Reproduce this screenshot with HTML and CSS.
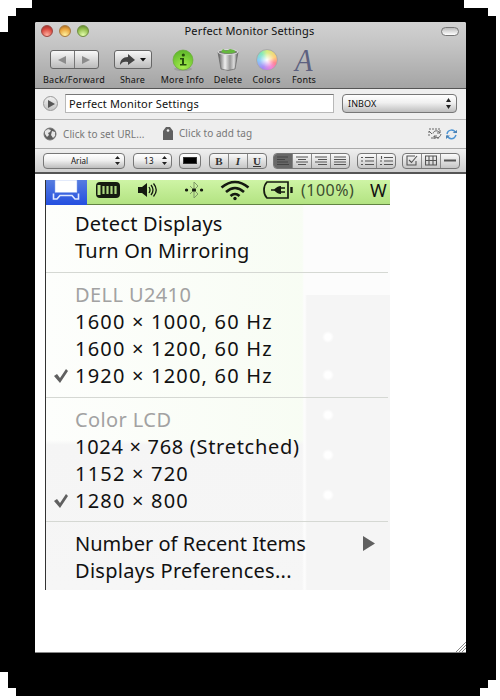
FILE: index.html
```html
<!DOCTYPE html>
<html lang="en">
<head>
<meta charset="utf-8">
<title>Perfect Monitor Settings</title>
<link rel="stylesheet" href="styles.css">
</head>
<body>
<main class="backdrop">
<section class="window">
  <header class="chrome">
    <div class="titlebar">
      <div class="lights"><i class="red"></i><i class="amber"></i><i class="green"></i></div>
      <h1>Perfect Monitor Settings</h1>
      <span class="pill"></span>
    </div>
    <nav class="tools">
      <div class="tool nav"><div class="icon"><div class="buttons"><b><svg width="8" height="8"><path d="M8 0V8L0 4Z" fill="#8c8c8c"/></svg></b><b><svg width="8" height="8"><path d="M0 0V8L8 4Z" fill="#8c8c8c"/></svg></b></div></div><span>Back/Forward</span></div>
      <div class="tool share"><div class="icon"><div class="buttons"><b><svg width="28" height="14"><path d="M1 12C1 7 4 4 9 4V1L16 7L9 12V9C5 8 3 9 1 12Z" fill="#444"/><path d="M21 5H27L24 8.500Z" fill="#111"/></svg></b></div></div><span>Share</span></div>
      <div class="tool info"><div class="icon"><svg width="24" height="24"><defs><radialGradient id="g" cx=".5" cy=".85" r=".9"><stop stop-color="#a6ee4d"/><stop offset="1" stop-color="#59b328"/></radialGradient></defs><ellipse cx="12" cy="21" rx="9" ry="2" fill="#888" opacity=".5"/><circle cx="12" cy="12" r="10" fill="url(#g)" stroke="#62a82d" stroke-width=".6"/><circle cx="12.300" cy="7" r="1.600" fill="#244c0c"/><path d="M9 10H13V16H15.500V17.500H9V16H11V11.500H9Z" fill="#244c0c"/></svg></div><span>More Info</span></div>
      <div class="tool trash"><div class="icon"><svg width="24" height="24"><defs><linearGradient id="t"><stop stop-color="#555"/><stop offset=".35" stop-color="#eee"/><stop offset=".6" stop-color="#999"/><stop offset=".8" stop-color="#ddd"/><stop offset="1" stop-color="#555"/></linearGradient></defs><path d="M2 4L5 21Q12 24 19 21L22 4Z" fill="url(#t)" stroke="#666" stroke-width=".7"/><ellipse cx="12" cy="4" rx="10" ry="2.500" fill="#777" stroke="#ddd"/><path d="M5 4L7 1L10 3L14 1L18 2L20 4Q12 7 5 4Z" fill="#65b83e"/></svg></div><span>Delete</span></div>
      <div class="tool colors"><div class="icon"><i class="wheel"></i></div><span>Colors</span></div>
      <div class="tool fonts"><div class="icon"><em>A</em></div><span>Fonts</span></div>
    </nav>
  </header>
  <div class="title-row">
    <span class="play"><svg width="7" height="8"><path d="M0 0V8L7 4Z" fill="#555"/></svg></span>
    <div class="field">Perfect Monitor Settings</div>
    <div class="popup inbox"><span>INBOX</span><svg width="5" height="11"><path d="M0 4L2.500 0L5 4ZM0 7H5L2.500 11Z" fill="#222"/></svg></div>
  </div>
  <div class="meta-row">
    <svg class="globe" width="14" height="14"><circle cx="7" cy="7" r="6" fill="#5d5d5d" stroke="#777"/><path d="M2 4L5 2L8 3L7 5L5 6L6 8L4 10L2 7ZM9 4L12 5V9L10 11L8 8Z" fill="#e5e5e5"/></svg>
    <span class="url">Click to set URL...</span>
    <svg class="tag" width="10" height="14"><path d="M0 4L3 0H7L10 4V13H0Z" fill="#606060"/><circle cx="5" cy="3.500" r="1.300" fill="#eee"/></svg>
    <span class="addtag">Click to add tag</span>
    <svg class="sync" width="14" height="12" fill="none" stroke="#666"><path d="M1 1H12M1 3V8M3 10H12" stroke-dasharray="2 1"/><path d="M1 3L4 6M5 5.500C6 2 10 2 12 5M12 2V5H9M13 6C12 10.500 8 10.500 6 8M6 11V8H9"/></svg>
    <svg class="refresh" width="11" height="11" fill="none" stroke="#4d94d3" stroke-width="1.500"><path d="M1 5C2 0 8 0 9.500 4M1 6.500C3 11 8 11 10 6"/><path d="M6.500 4H11V1ZM0 10V6.500H4Z" fill="#4d82b3" stroke="none"/></svg>
  </div>
  <div class="format">
    <div class="popup face"><span>Arial</span><svg width="5" height="9"><path d="M0 3L2.500 0L5 3ZM0 6H5L2.500 9Z" fill="#222"/></svg></div>
    <div class="popup size"><span>13</span><svg width="5" height="9"><path d="M0 3L2.500 0L5 3ZM0 6H5L2.500 9Z" fill="#222"/></svg></div>
    <div class="popup swatch"><i></i></div>
    <div class="seg biu"><b>B</b><b><em>I</em></b><b><u>U</u></b></div>
    <div class="seg align">
      <b class="on"><svg width="12" height="10"><path d="M0 1H11M0 3.500H8M0 6H11M0 8.500H12"/></svg></b>
      <b><svg width="12" height="10"><path d="M0 1H12M2 3.500H10M0 6H12M2 8.500H10"/></svg></b>
      <b><svg width="12" height="10"><path d="M0 1H12M3 3.500H12M0 6H12M3 8.500H12"/></svg></b>
      <b><svg width="12" height="10"><path d="M0 1H12M0 3.500H12M0 6H12M0 8.500H12"/></svg></b>
    </div>
    <div class="seg lists">
      <b><svg width="13" height="10"><path d="M0 1.500H2M4 1.500H13M0 5H2M4 5H13M0 8.500H2M4 8.500H13"/></svg></b>
      <b><svg width="13" height="10"><path d="M1.500 0V3M0 5H2M0 8.500H2M4 1.500H13M4 5H13M4 8.500H13"/></svg></b>
    </div>
    <div class="seg insert">
      <b><svg width="12" height="11"><path d="M9 1H1V10H10V6M3 5L5.500 7.500L11 1"/></svg></b>
      <b><svg width="12" height="11"><path d="M.5 1H11.500V10H.5ZM4 1V10M8 1V10M0 5.500H12"/></svg></b>
      <b><svg width="12" height="11"><path d="M0 5.500H12" stroke-width="2"/></svg></b>
    </div>
  </div>
  <div class="content">
    <div class="shot">
      <div class="menubar">
        <div class="active"><svg width="28" height="22" fill="none" stroke="#dfe8ff"><path d="M3 0H25V12.500H3Z" fill="#fff" stroke="#8fa9ee" stroke-width=".5"/><path d="M1.500 13.500V19H5L8 15.500H20L23 19H26.500V13.500" stroke-width="1.600"/></svg></div>
        <svg class="ram" width="26" height="18"><rect x="1" y="1" width="24" height="16" rx="4" fill="#151b10"/><rect x="2.500" y="4" width="3" height="10" fill="#b7e487"/><path d="M8.500 5V13M12.500 5V13M16.500 5V13M20.500 5V13" stroke="#abd77f" stroke-width="2.200"/></svg>
        <svg class="sound" width="21" height="16" fill="none" stroke="#141a10" stroke-width="1.600"><path d="M1 5H5L10 1V15L5 11H1Z" fill="#141a10" stroke="none"/><path d="M12 5Q14 8 12 11M14 3Q18 8 14 13M16.500 1.500Q22 8 16.500 14.500" stroke-width="1.300"/></svg>
        <svg class="bt" width="20" height="20"><path d="M10 2V18L14 14L6 6M6 14L14 6L10 2" fill="none" stroke="#809b68"/><path d="M2.500 10H2.600M9.500 10H10.500M17.500 10H17.600" stroke="#151b10" stroke-width="3.200" stroke-linecap="round"/></svg>
        <svg class="wifi" width="30" height="21" fill="none" stroke="#151b10" stroke-width="2.600"><path d="M1.500 7.500Q15-3.500 28.500 7.500M6 12Q15 4 24 12M10.500 16Q15 12 19.500 16"/><circle cx="15" cy="18.500" r="1.700" fill="#151b10" stroke="none"/></svg>
        <svg class="battery" width="31" height="18" fill="none" stroke="#151b10" stroke-width="1.700"><path d="M4 1H25V17H4Q1 14 1 9T4 1Z"/><path d="M28.500 6V12" stroke-width="2.400"/><path d="M8 9H12M18 7H22M18 11H22"/><path d="M11 9Q14 5 18 5V13Q14 13 11 9Z" fill="#151b10" stroke="none"/></svg>
        <span class="percent">(100%)</span>
        <span class="day">W</span>
      </div>
      <div class="menu">
        <div class="row"><span class="a1">Detect Displays</span></div>
        <div class="row"><span class="a2">Turn On Mirroring</span></div>
        <hr>
        <div class="row label"><span>DELL U2410</span></div>
        <div class="row num"><span>1600 × 1000, 60 Hz</span></div>
        <div class="row num"><span>1600 × 1200, 60 Hz</span></div>
        <div class="row num"><svg class="check" width="16" height="16"><path d="M1 8L4 6L7 10L13 1L15 3L7 15Z" fill="#606060"/></svg><span>1920 × 1200, 60 Hz</span></div>
        <hr>
        <div class="row label"><span>Color LCD</span></div>
        <div class="row num"><span class="a5">1024 × 768 (Stretched)</span></div>
        <div class="row num"><span>1152 × 720</span></div>
        <div class="row num"><svg class="check" width="16" height="16"><path d="M1 8L4 6L7 10L13 1L15 3L7 15Z" fill="#606060"/></svg><span>1280 × 800</span></div>
        <hr class="last">
        <div class="row"><span class="a6">Number of Recent Items</span><svg class="more" width="12" height="15"><path d="M0 0V15L12 7.500Z" fill="#606060"/></svg></div>
        <div class="row"><span class="a7">Displays Preferences...</span></div>
      </div>
    </div>
    <svg class="grip" width="11" height="11"><path d="M1 11L11 1M4 11L11 4M7 11L11 7" stroke="#888" fill="none"/></svg>
  </div>
</section>
</main>
</body>
</html>
```
FILE: styles.css
```css
* { box-sizing: border-box; }
body { margin: 0; background: #fff; font-family: "Noto Sans", "Open Sans", sans-serif; color: #111; }
svg { display: block; flex: none; }
.backdrop {
  width: 496px; height: 696px; padding: 22px 30px 43px 35px; background: #000;
  clip-path: polygon(32px 0, 464px 0, 464px 8px, 488px 8px, 488px 16px, 496px 16px, 496px 680px, 488px 680px, 488px 688px, 480px 688px, 480px 696px, 16px 696px, 16px 688px, 8px 688px, 8px 672px, 0 672px, 0 32px, 8px 32px, 8px 16px, 16px 16px, 16px 8px, 32px 8px);
}
.window { width: 431px; height: 631px; background: #fff; display: flex; flex-direction: column; border-radius: 2px 2px 0 0; overflow: hidden; border-bottom: 1px solid #888; }
.chrome { height: 67px; background: linear-gradient(#d2d2d2, #c4c4c4 35%, #a4a4a4); border-bottom: 1px solid #555; }
.titlebar { height: 19px; display: grid; grid-template-columns: 60px 1fr 60px; align-items: center; }
.lights { display: flex; gap: 6px; padding: 0 0 1px 6px; }
.lights i { width: 12px; height: 12px; border-radius: 50%; border: 1px solid #775; }
.lights .red { background: radial-gradient(circle at 50% 90%, #ffb0a0, #d8493f 60%, #8d2e28); border-color: #9a4742; }
.lights .amber { background: radial-gradient(circle at 50% 90%, #fff2a0, #e9a43c 60%, #985d1d); border-color: #a77a40; }
.lights .green { background: radial-gradient(circle at 50% 90%, #e5ffae, #92bd4c 60%, #547a2a); border-color: #708d43; }
h1 { margin: 0; font-size: 11px; line-height: 16px; padding: 0 2px 2px 0; font-weight: 400; text-align: center; letter-spacing: .18px; white-space: nowrap; }
.pill { width: 18px; height: 9px; border: 1px solid #777; border-radius: 5px; background: linear-gradient(#bbb, #fff); justify-self: end; margin: 0 7px 1px 0; }
.tools { height: 47px; display: flex; padding-left: 4px; }
.tool { display: flex; flex-direction: column; align-items: center; font-size: 9px; line-height: 13px; white-space: nowrap; }
.icon { height: 32px; padding-top: 5px; display: flex; align-items: center; justify-content: center; }
.nav { width: 70px; letter-spacing: .32px; } .share { width: 47px; letter-spacing: .2px; } .info { width: 53px; letter-spacing: .2px; } .trash { width: 38px; letter-spacing: .2px; } .colors { width: 39px; letter-spacing: .2px; } .fonts { width: 36px; letter-spacing: .2px; }
.buttons { display: flex; height: 19px; border: 1px solid #666; border-radius: 3px; background: linear-gradient(#f8f8f8, #bbb); }
.buttons b { width: 23px; display: flex; align-items: center; justify-content: center; }
.buttons b + b { width: 24px; border-left: 1px solid #777; }
.share b { width: 36px; }
.wheel { width: 22px; height: 22px; border-radius: 50%; background: radial-gradient(circle, #fff, rgba(255,255,255,.3) 50%, transparent), conic-gradient(#c9e85a, #ffc14f 70deg, #ff5e6e 110deg, #ee60cf 150deg, #8a68f4 210deg, #64bdf4 270deg, #5be2a5 320deg, #c9e85a); border: 1px solid #aaa; }
.fonts em { font: italic 32px/22px "Liberation Serif", serif; color: #5d6180; transform: scaleX(.9); }
.title-row { height: 31px; display: flex; align-items: center; background: #efefef; padding: 0 0 1px 8px; border-bottom: 1px solid #b5b5b5; }
.play { width: 15px; height: 15px; border: 1px solid #999; border-radius: 50%; background: linear-gradient(#f0f0f0, #c5c5c5); display: flex; align-items: center; justify-content: center; padding-left: 1px; }
.field { width: 269px; height: 19px; margin-left: 7px; padding-left: 3px; background: #fff; border: 1px solid #b8b8b8; border-top-color: #777; font-size: 11px; line-height: 18px; letter-spacing: .18px; }
.popup { display: flex; align-items: center; justify-content: space-between; border: 1px solid #777; border-radius: 4px; background: linear-gradient(#fff, #f0f0f0 45%, #bebebe); }
.inbox { width: 115px; height: 19px; margin-left: 8px; padding: 0 5px; font-size: 9px; letter-spacing: .1px; }
.meta-row { height: 29px; display: flex; align-items: center; background: #eee; border-bottom: 1px solid #aaa; padding-left: 8px; font-size: 10px; color: #777; white-space: nowrap; }
.url { width: 98px; margin-left: 6px; letter-spacing: .08px; }
.tag { margin-left: 2px; }
.addtag { width: 233px; margin-left: 6px; padding-bottom: 2px; letter-spacing: .05px; }
.sync { margin-left: 16px; } .refresh { margin-left: 4px; }
.format { height: 25px; display: flex; align-items: center; background: linear-gradient(#efefef, #cfcfcf); border-bottom: 2px solid #555; padding-left: 8px; font-size: 8px; }
.format .popup { height: 16px; }
.face { width: 82px; padding: 0 4px 0 27px; }
.size { width: 39px; margin-left: 8px; padding: 0 4px 0 10px; letter-spacing: .3px; }
.swatch { width: 22px; margin-left: 7px; padding: 0 3px; }
.swatch i { width: 14px; height: 7px; border: 1px solid #333; background: #000; }
.seg { height: 16px; border: 1px solid #777; border-radius: 4px; background: linear-gradient(#fafafa, #c6c6c6); display: flex; overflow: hidden; }
.seg b { flex: 1; display: flex; align-items: center; justify-content: center; font: bold 11px "Liberation Serif", serif; color: #333; }
.seg b + b { border-left: 1px solid #888; }
.seg svg { fill: none; stroke: #555; stroke-width: 1.1; }
.seg .on { background: #686868; } .seg .on svg { stroke: #444; }
.biu { width: 58px; margin-left: 8px; } .align { width: 77px; margin-left: 6px; } .lists { width: 39px; margin-left: 7px; } .insert { width: 58px; margin-left: 6px; }
.content { flex: 1; position: relative; padding: 6px 0 0 10px; }
.shot { width: 345px; height: 410px; border-left: 1px solid #333; }
.menubar { height: 25px; display: flex; align-items: flex-start; background: linear-gradient(#cef4a5, #b3e382); border-bottom: 1px solid #618342; }
.active { flex: none; width: 41px; height: 25px; background: linear-gradient(#567cdf, #244fe0); padding-left: 6px; }
.ram { margin: 1px 0 0 8px; } .sound { margin: 2px 0 0 16px; } .bt { margin-left: 26px; } .wifi { margin-left: 16px; } .battery { margin: 1px 0 0 13px; }
.percent { flex: none; margin-left: 7px; width: 69px; font-size: 16px; line-height: 20px; letter-spacing: .5px; color: #3d4e2f; }
.day { flex: none; font-size: 18px; line-height: 21px; }
.menu { height: 385px; padding-top: 5px; background: radial-gradient(circle at 282px 132px, #fff 3px, transparent 6px), radial-gradient(circle at 282px 170px, #fff 3px, transparent 6px), radial-gradient(circle at 282px 210px, #fff 3px, transparent 6px), radial-gradient(circle at 282px 250px, #fff 3px, transparent 6px), radial-gradient(circle at 282px 290px, #fff 3px, transparent 6px), linear-gradient(90deg, transparent 259px, #f5f5f5 261px) 0 90px no-repeat, linear-gradient(90deg, transparent 256px, #fcfcfc 258px), linear-gradient(transparent 235px, #f5f5f5 240px, #f6f6f6), linear-gradient(90deg, #fdfefc, #f6fcf1); }
.row { position: relative; height: 27px; display: flex; align-items: center; padding-left: 29px; font-size: 20px; line-height: 27px; white-space: pre; }
.label { color: #a2a2a2; }
.check { position: absolute; left: 7px; top: 6px; }
.more { position: absolute; left: 317px; top: 6px; }
hr { height: 1px; margin: 8px 2px 8px 0; border: 0; background: #d5d8d3; }
hr.last { margin-top: 7px; }
.row span { letter-spacing: .4px; }
.num span { letter-spacing: 1.2px; }
.row .a1 { letter-spacing: .23px; } .row .a2 { letter-spacing: .2px; } .row .a5 { letter-spacing: .7px; } .row .a6 { letter-spacing: .02px; } .row .a7 { letter-spacing: .28px; }
.grip { position: absolute; right: 0; bottom: 0; }
```
